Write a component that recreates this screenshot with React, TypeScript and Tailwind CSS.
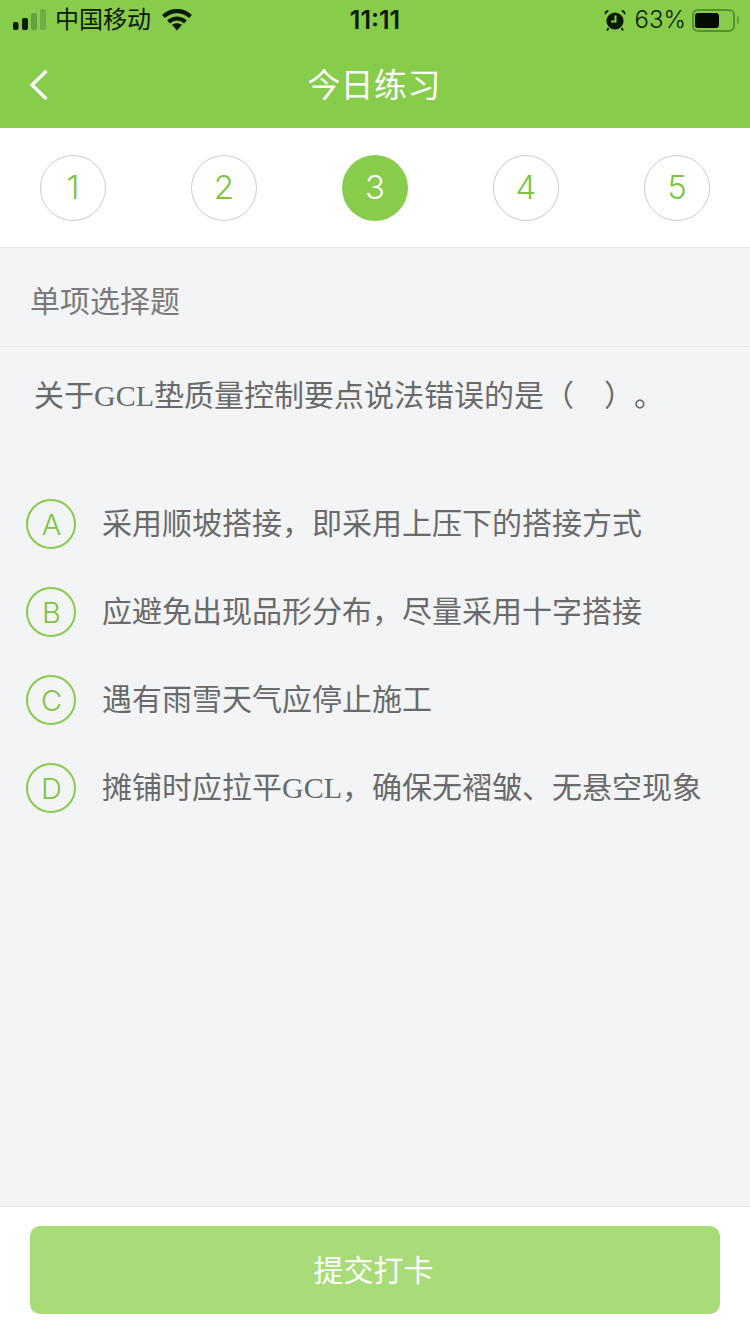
const sf = "font-['Inter','Noto_Sans_CJK_SC',sans-serif]";

const steps = [1, 2, 3, 4, 5];

const options = [
  { key: "A", text: "采用顺坡搭接，即采用上压下的搭接方式" },
  { key: "B", text: "应避免出现品形分布，尽量采用十字搭接" },
  { key: "C", text: "遇有雨雪天气应停止施工" },
  { key: "D", text: "摊铺时应拉平GCL，确保无褶皱、无悬空现象" },
];

function StatusBar() {
  return (
    <div className="flex h-10 items-center justify-between text-[#0b1a05]">
      <div className="flex w-[260px] items-center pl-[13px]">
        <svg width="34" height="22" viewBox="0 0 34 22" fill="currentColor">
          <rect x="0" y="13" width="5.5" height="8" rx="2" />
          <rect x="9" y="9" width="6" height="12" rx="2" />
          <rect x="18" y="4" width="6" height="17" rx="2" fill="#639f3f" />
          <rect x="27" y="0" width="6" height="21" rx="2" fill="#6fae48" />
        </svg>
        <span className="ml-[8px] text-[24px] leading-none">中国移动</span>
        <svg className="ml-[11px]" width="30" height="22" viewBox="0 0 30 22" fill="none">
          <path d="M1.5 7.5C9.5 .2 20.5 .2 28.5 7.5" stroke="currentColor" strokeWidth="4.2" />
          <path d="M6.5 12.8C11.6 8.4 18.4 8.4 23.5 12.8" stroke="currentColor" strokeWidth="4.2" />
          <path d="M10 15.8 15 21.5l5-5.7c-2.8-2.2-7.2-2.2-10 0Z" fill="currentColor" />
        </svg>
      </div>
      <span className={`text-[25px] font-semibold leading-none ${sf}`}>11:11</span>
      <div className="flex w-[260px] items-center justify-end pr-[11px]">
        <svg width="22" height="22" viewBox="0 0 22 22" fill="currentColor">
          <circle cx="11" cy="12" r="8.6" />
          <path d="M.8 6 5 1.8 3 1 .6 3.2ZM21.2 6 17 1.8 19 1l2.4 2.2Z" />
          <path d="M4.5 19 3 21.5M17.5 19l1.5 2.5" stroke="currentColor" strokeWidth="1.8" />
          <path d="M11.5 6.5v6H7" stroke="#88cc4c" strokeWidth="2" fill="none" />
        </svg>
        <span className={`ml-[9px] text-[24px] font-[350] leading-none ${sf}`}>63%</span>
        <div className="ml-[6px] flex h-[23px] w-[43px] items-center rounded-[6px] border-2 border-[#55912f] py-[2px] pl-[1px]">
          <div className="h-full w-[24px] rounded-[3px] bg-[#050a02]" />
        </div>
        <div className="ml-[2px] h-[8px] w-[2px] rounded-r-sm bg-[#5f9c3e]" />
      </div>
    </div>
  );
}

function OptionRow({ optionKey, text }: { optionKey: string; text: string }) {
  return (
    <div className="flex h-[88px] items-center pl-[26px]">
      <div className={`flex h-[50px] w-[50px] shrink-0 items-center justify-center rounded-full border-2 border-[#88cc4c] pt-[2px] pl-[1px] text-[29px] font-[350] text-[#7cc442] ${sf}`}>
        {optionKey}
      </div>
      <span className="ml-[26px] whitespace-nowrap text-[30px] leading-none text-[#6a6a6a]">{text}</span>
    </div>
  );
}

export default function App() {
  return (
    <div className="flex h-[1334px] w-[750px] flex-col overflow-hidden bg-[#f3f4f6] font-['Liberation_Serif','Noto_Sans_CJK_SC',sans-serif]">
      <header className="h-[128px] shrink-0 bg-[#88cc4c]">
        <StatusBar />
        <div className="relative flex h-[88px] items-center justify-center pt-[4px]">
          <svg className="absolute left-[28px] top-[28px]" width="22" height="34" viewBox="0 0 22 34" fill="none">
            <path d="M18.5 3 4 17l14.5 14" stroke="white" strokeWidth="3.4" />
          </svg>
          <h1 className="pr-[2px] text-[33px] font-normal leading-none tracking-[0.4px] text-white">今日练习</h1>
        </div>
      </header>

      <div className="flex h-[120px] shrink-0 items-center justify-between border-b border-[#e6e6e6] bg-white px-[40px] pt-[1px]">
        {steps.map((n) =>
          n === 3 ? (
            <div key={n} className={`flex h-[66px] w-[66px] items-center justify-center rounded-full bg-[#88cc4c] text-[33px] font-[350] text-white ${sf}`}>
              {n}
            </div>
          ) : (
            <div key={n} className={`flex h-[66px] w-[66px] items-center justify-center rounded-full border border-[#cccccc] text-[33px] font-[350] text-[#7cc442] ${sf}`}>
              {n}
            </div>
          ),
        )}
      </div>

      <div className="flex h-[99px] shrink-0 items-center border-b border-[#e8e9eb] pl-[30px] pt-[10px]">
        <span className="text-[30px] leading-none text-[#7a7a7a]">单项选择题</span>
      </div>

      <p className="h-[108px] shrink-0 whitespace-nowrap pl-[34px] pt-[34px] text-[30px] leading-none text-[#6a6a6a] [text-spacing-trim:space-all]">
        关于GCL垫质量控制要点说法错误的是（&nbsp;&nbsp;&nbsp;&nbsp;）。
      </p>

      <div className="mt-[25px] flex-1">
        {options.map((o) => (
          <OptionRow key={o.key} optionKey={o.key} text={o.text} />
        ))}
      </div>

      <footer className="flex h-[128px] shrink-0 justify-center border-t border-[#e8e8e8] bg-white pt-[19px]">
        <button className="h-[88px] w-[690px] rounded-[10px] bg-[#a9dc78] pr-[3px] text-[30px] text-white">提交打卡</button>
      </footer>
    </div>
  );
}
